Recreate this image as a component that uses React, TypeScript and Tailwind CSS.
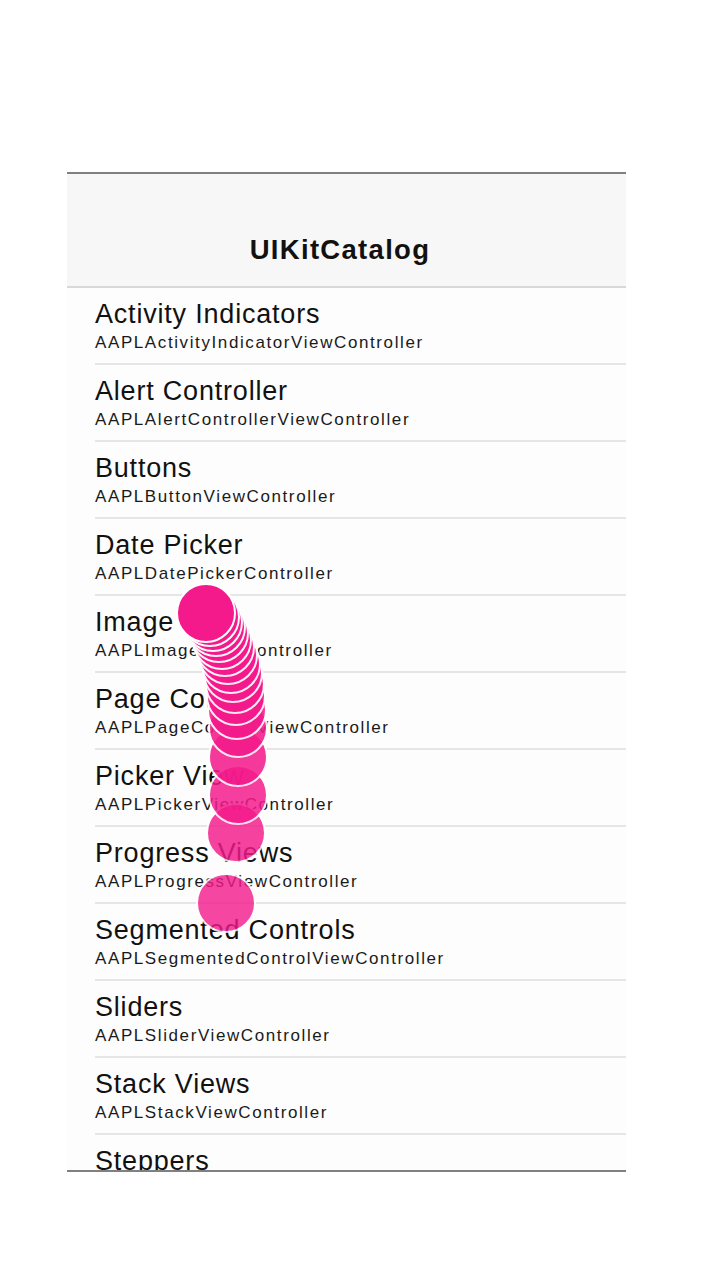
const rows = [
  { title: 'Activity Indicators', controller: 'AAPLActivityIndicatorViewController' },
  { title: 'Alert Controller', controller: 'AAPLAlertControllerViewController' },
  { title: 'Buttons', controller: 'AAPLButtonViewController' },
  { title: 'Date Picker', controller: 'AAPLDatePickerController' },
  { title: 'Image View', controller: 'AAPLImageViewController' },
  { title: 'Page Control', controller: 'AAPLPageControlViewController' },
  { title: 'Picker View', controller: 'AAPLPickerViewController' },
  { title: 'Progress Views', controller: 'AAPLProgressViewController' },
  { title: 'Segmented Controls', controller: 'AAPLSegmentedControlViewController' },
  { title: 'Sliders', controller: 'AAPLSliderViewController' },
  { title: 'Stack Views', controller: 'AAPLStackViewController' },
  { title: 'Steppers', controller: 'AAPLStepperViewController' },
]

// touch trail, oldest first: [centerX, centerY, opacity]
const touches: [number, number, number][] = [
  [226, 903, 0.8],
  [236, 833, 0.82],
  [238, 795, 0.84],
  [238, 757, 0.86],
  [238, 728, 0.88],
  [237, 710, 0.89],
  [236, 696, 0.9],
  [235, 684, 0.9],
  [233, 673, 0.91],
  [231, 664, 0.92],
  [228, 655, 0.93],
  [225, 647, 0.94],
  [222, 640, 0.95],
  [219, 633, 0.96],
  [216, 627, 0.97],
  [213, 622, 0.98],
  [210, 617, 0.99],
  [206, 613, 1],
]

function CatalogRow({ title, controller }: { title: string; controller: string }) {
  return (
    <div className="pl-[28px]">
      <div className="border-b-2 border-[#e6e6e6] pt-[11px] pb-[10px]">
        <div className="text-[27px] leading-[30px] tracking-[0.8px] text-[#111]">{title}</div>
        <div className="mt-[4px] text-[17px] leading-[20px] tracking-[1.6px] text-[#1a1a1a]">{controller}</div>
      </div>
    </div>
  )
}

export default function App() {
  return (
    <div className="relative min-h-[1280px] w-[706px] bg-white pt-[172px] font-['Liberation_Sans',Arial,sans-serif]">
      <div className="ml-[67px] flex h-[1000px] w-[559px] flex-col overflow-hidden border-y-2 border-[#808080] bg-[#fdfdfd]">
        <div className="flex h-[112px] shrink-0 items-end justify-center bg-[#f7f7f7] pb-[20px] pr-[13px]">
          <span className="text-[27.5px] font-bold leading-[32px] tracking-[1.3px] text-[#111]">UIKitCatalog</span>
        </div>
        <div className="h-[2px] shrink-0 bg-[#d8d8d8]" />
        {rows.map((row) => (
          <CatalogRow key={row.title} title={row.title} controller={row.controller} />
        ))}
      </div>

      {touches.map(([x, y, o], i) => (
        <div
          key={i}
          className="absolute h-[60px] w-[60px] rounded-full border-2 border-white bg-[#f41a8b]"
          style={{ left: x - 30, top: y - 30, opacity: o }}
        />
      ))}
    </div>
  )
}
